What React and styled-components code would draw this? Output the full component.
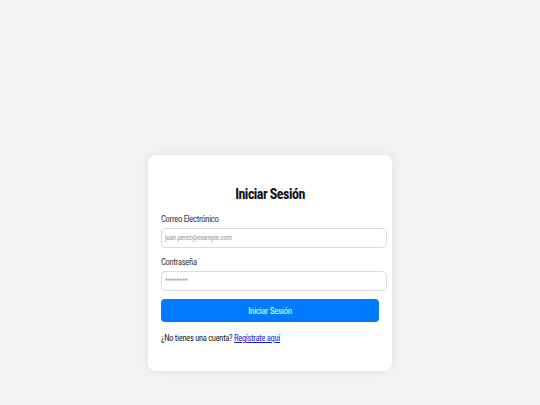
import styled, { createGlobalStyle } from "styled-components";

const GlobalStyle = createGlobalStyle`
  html, body {
    margin: 0;
    padding: 0;
    background: #f2f2f2;
  }
  body {
    font-family: "Roboto Condensed", "Liberation Sans", Arial, sans-serif;
  }
`;

const Page = styled.div`
  display: flex;
  justify-content: center;
  padding-top: 155px;
  min-height: 405px;
  box-sizing: border-box;
`;

const Card = styled.div`
  width: 244px;
  height: 216px;
  box-sizing: border-box;
  padding: 31px 13px 0;
  background: #ffffff;
  border-radius: 8px;
  box-shadow: 0 0 8px rgba(0, 0, 0, 0.08);
`;

const Title = styled.h2`
  margin: 0 0 11px;
  text-align: center;
  font-size: 14px;
  line-height: 16px;
  letter-spacing: -0.5px;
  font-weight: bold;
  color: #111;
`;

const Field = styled.div`
  display: flex;
  flex-direction: column;
  margin-bottom: 8px;
`;

const Label = styled.label`
  font-size: 8.5px;
  line-height: 12px;
  letter-spacing: -0.25px;
  color: #333;
  margin-bottom: 3px;
`;

const Input = styled.input`
  box-sizing: content-box;
  width: 100%;
  height: 18px;
  padding: 0 3px;
  border: 1px solid #dcdcdc;
  border-radius: 4px;
  font-family: inherit;
  font-size: 7px;
  letter-spacing: -0.2px;
  color: #333;
  outline: none;
  &::placeholder {
    color: #9a9a9a;
  }
`;

const Button = styled.button`
  display: block;
  width: 100%;
  height: 23px;
  border: none;
  border-radius: 4px;
  background: #007bff;
  color: #eef5ff;
  font-family: inherit;
  font-size: 9px;
  letter-spacing: -0.3px;
  cursor: pointer;
`;

const Footer = styled.p`
  margin: 10px 0 0;
  font-size: 8.5px;
  line-height: 12px;
  letter-spacing: -0.3px;
  color: #222;
`;

const Link = styled.a`
  color: #1a1ae0;
  text-decoration: underline;
`;

export default function App() {
  return (
    <>
      <GlobalStyle />
      <Page>
        <Card>
          <Title>Iniciar Sesión</Title>
          <Field>
            <Label>Correo Electrónico</Label>
            <Input type="email" placeholder="juan.perez@example.com" />
          </Field>
          <Field>
            <Label>Contraseña</Label>
            <Input type="password" placeholder="********" />
          </Field>
          <Button>Iniciar Sesión</Button>
          <Footer>
            ¿No tienes una cuenta? <Link href="#">Regístrate aquí</Link>
          </Footer>
        </Card>
      </Page>
    </>
  );
}
